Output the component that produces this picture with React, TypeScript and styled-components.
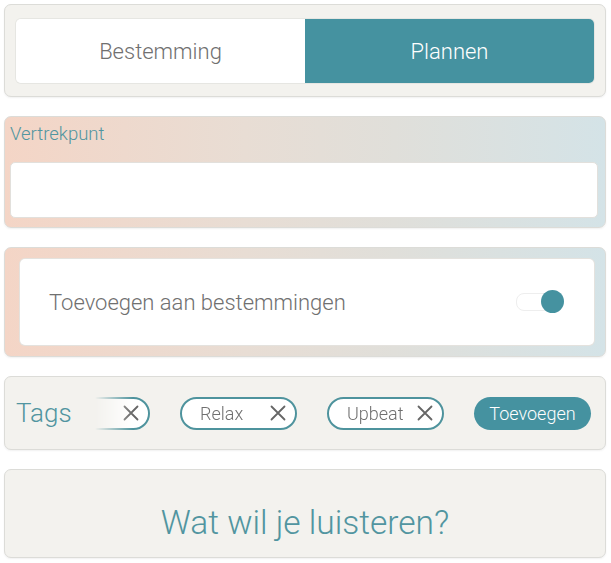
import styled, { createGlobalStyle } from "styled-components";

const GlobalStyle = createGlobalStyle`
  body {
    margin: 0;
    background: #ffffff;
    font-family: Roboto, "Liberation Sans", sans-serif;
    font-weight: 300;
  }
`;

const teal = "#4592a0";
const tealText = "#5195a0";

const Page = styled.div`
  display: flex;
  flex-direction: column;
  gap: 19px;
  padding: 4px 5px 4px 4px;
`;

type CardProps = { $gradient?: boolean };

const Card = styled.section<CardProps>`
  border-radius: 7px;
  border: 1px solid #dcdcd8;
  box-shadow: 0 1px 2px rgba(0, 0, 0, 0.06);
  background: ${(p) =>
    p.$gradient
      ? "linear-gradient(90deg, #f4d5c6 0%, #e8ddd4 40%, #e0dfda 65%, #d4e3e7 100%)"
      : "#f3f2ee"};
`;

const SegmentCard = styled(Card)`
  padding: 14px 11px 13px 11px;
`;

const Segments = styled.div`
  display: grid;
  grid-template-columns: 1fr 1fr;
  height: 64px;
  border-radius: 5px;
  overflow: hidden;
  box-shadow: 0 0 0 1px #e6e6e2;
`;

const Segment = styled.button<{ $active?: boolean }>`
  border: none;
  font-family: inherit;
  font-weight: 300;
  font-size: 22px;
  color: ${(p) => (p.$active ? "#ffffff" : "#707070")};
  background: ${(p) => (p.$active ? teal : "#ffffff")};
`;

const FieldCard = styled(Card)`
  padding: 5px 7px 9px 5px;
`;

const Label = styled.div`
  font-size: 18.5px;
  color: ${tealText};
  line-height: 24px;
  margin-bottom: 16px;
`;

const Input = styled.input`
  display: block;
  box-sizing: border-box;
  width: 100%;
  height: 56px;
  border: 1px solid #e2e0dc;
  border-radius: 5px;
  background: #ffffff;
`;

const ToggleCard = styled(Card)`
  padding: 11px 11px 11px 15px;
`;

const ToggleRow = styled.div`
  display: flex;
  align-items: center;
  justify-content: space-between;
  height: 86px;
  padding: 0 33px 0 29px;
  background: #ffffff;
  border-radius: 5px;
  box-shadow: 0 0 0 1px #e4e2de;
`;

const ToggleText = styled.span`
  font-size: 22px;
  color: #707070;
`;

const Switch = styled.div`
  position: relative;
  width: 43px;
  height: 16px;
  border-radius: 8px;
  border: 1px solid #eeeeee;
  background: #ffffff;
`;

const Knob = styled.div`
  position: absolute;
  right: -4px;
  top: -4px;
  width: 23px;
  height: 23px;
  border-radius: 50%;
  background: ${teal};
`;

const TagsCard = styled(Card)`
  display: flex;
  align-items: center;
  height: 72px;
  padding: 0 14px 0 11px;
`;

const TagsLabel = styled.span`
  font-size: 26px;
  color: ${tealText};
  width: 79px;
  flex-shrink: 0;
`;

const ChipScroller = styled.div`
  display: flex;
  justify-content: flex-end;
  gap: 30px;
  width: 349px;
  overflow: hidden;
  padding: 2px 0;
  -webkit-mask-image: linear-gradient(90deg, transparent 0, #000 38px);
  mask-image: linear-gradient(90deg, transparent 0, #000 38px);
`;

const Chip = styled.div`
  flex-shrink: 0;
  box-sizing: border-box;
  display: flex;
  align-items: center;
  justify-content: space-between;
  width: 117px;
  height: 33px;
  padding: 0 8px 0 18px;
  border: 2px solid #4e939d;
  border-radius: 17px;
  background: #ffffff;
  font-size: 18px;
  color: #707070;
`;

const AddButton = styled.button`
  margin-left: 30px;
  width: 117px;
  height: 33px;
  border: none;
  border-radius: 17px;
  background: ${teal};
  color: #ffffff;
  font-family: inherit;
  font-weight: 300;
  font-size: 18px;
  padding: 0;
`;

const PromptCard = styled(Card)`
  display: flex;
  justify-content: center;
  align-items: center;
  box-sizing: border-box;
  height: 89px;
  padding-top: 18px;
`;

const Prompt = styled.span`
  font-size: 33.5px;
  color: ${tealText};
`;

const Close = () => (
  <svg width="18" height="18" viewBox="0 0 18 18" fill="none">
    <path d="M2.5 2.5 L15.5 15.5 M15.5 2.5 L2.5 15.5" stroke="#666" strokeWidth="1.8" strokeLinecap="round" />
  </svg>
);

const tags = ["Chill", "Relax", "Upbeat"];

export default function App() {
  return (
    <>
      <GlobalStyle />
      <Page>
        <SegmentCard>
          <Segments>
            <Segment>Bestemming</Segment>
            <Segment $active>Plannen</Segment>
          </Segments>
        </SegmentCard>

        <FieldCard $gradient>
          <Label>Vertrekpunt</Label>
          <Input />
        </FieldCard>

        <ToggleCard $gradient>
          <ToggleRow>
            <ToggleText>Toevoegen aan bestemmingen</ToggleText>
            <Switch>
              <Knob />
            </Switch>
          </ToggleRow>
        </ToggleCard>

        <TagsCard>
          <TagsLabel>Tags</TagsLabel>
          <ChipScroller>
            {tags.map((t) => (
              <Chip key={t}>
                {t}
                <Close />
              </Chip>
            ))}
          </ChipScroller>
          <AddButton>Toevoegen</AddButton>
        </TagsCard>

        <PromptCard>
          <Prompt>Wat wil je luisteren?</Prompt>
        </PromptCard>
      </Page>
    </>
  );
}
